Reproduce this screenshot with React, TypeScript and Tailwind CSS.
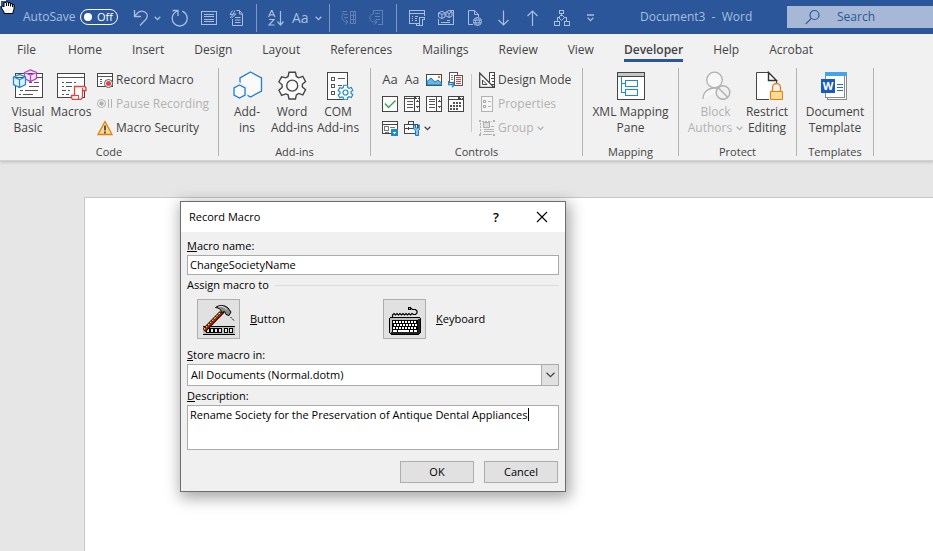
import { useState } from "react";
import type { ReactNode } from "react";
import clsx from "clsx";

const tabs = ["File", "Home", "Insert", "Design", "Layout", "References", "Mailings", "Review", "View", "Developer", "Help", "Acrobat"];

function Icon({ size = 16, crisp = true, className, children }: { size?: number; crisp?: boolean; className?: string; children: ReactNode }) {
    return (
        <svg
            width={size}
            height={size}
            viewBox={`0 0 ${size} ${size}`}
            fill="none"
            stroke="currentColor"
            shapeRendering={crisp ? "crispEdges" : "auto"}
            className={clsx("shrink-0", className)}
            aria-hidden="true"
        >
            {children}
        </svg>
    );
}

function Chevron({ className }: { className?: string }) {
    return (
        <svg width="7" height="5" viewBox="0 0 7 5" fill="none" stroke="currentColor" strokeWidth="1.3" className={clsx("shrink-0", className)} aria-hidden="true">
            <path d="M.7.8 3.5 3.6 6.3.8" />
        </svg>
    );
}

/* ---------- quick access toolbar ---------- */

const UndoIcon = () => (
    <Icon size={18} crisp={false}>
        <path d="M2.5 1v6.500H9M2.800 7.200C5 4 8 1.800 11 2.300c4 .7 5.300 4.200 3.600 7-1.200 2-3.800 4-6.600 7.200" strokeWidth="1.3" />
    </Icon>
);

const RedoIcon = () => (
    <Icon size={18} crisp={false}>
        <path d="M1.500 1.500h5.500v5.500M6.500 2C3 3.500 1.200 6.500 1.200 9.500a7.500 7.500 0 0 0 15 0c0-3.500-2-6-5-7.300" strokeWidth="1.3" />
    </Icon>
);

const ListIcon = () => (
    <Icon>
        <path d="M.5 1.500h15v13H.5zM3 4.500h10M3 6.500h10M3 9.500h10M3 11.500h10" />
    </Icon>
);

const FlashDocIcon = () => (
    <Icon crisp={false}>
        <path d="M7.500.5h3l3 3.500v11.500h-10V9M10.500.5V4h3M6 7.500h5.500M6 10h5.500M6 12.500h5.500" />
        <path d="M3.500.5 1 4.500h3L1 8M6 .5 4 4h3L2.500 8" />
    </Icon>
);

const SortIcon = () => (
    <Icon crisp={false}>
        <path d="M.5 7 3.500.5h.5L7 7M1.700 4.800h4M1 9.500h5L1 15h5.500M12.500 1v14M9.500 11.500l3 3.500 3-3.500" strokeWidth="1.200" />
    </Icon>
);

const MergeIcon = () => (
    <Icon>
        <path d="M1 1.500h5M3 4.500h4M3 7.500h4M9.500 1.500h5v12h-5zM12 1.500v12M9.500 5.500h5M9.500 9.500h5" />
        <path d="M3 3C0 5 0 10 4.500 12H7M4.500 9.500 7 12l-2.500 2.500" shapeRendering="auto" />
    </Icon>
);

const InsertDocIcon = () => (
    <Icon>
        <path d="M4 .5h9.500v14H9M4.500 0v4M6 3.500h5M6 6.500h5M7 9.500h4" />
        <path d="M4 4C-.5 5 0 11 4.500 12H8M5.500 9.500 8 12l-2.500 2.500" shapeRendering="auto" />
    </Icon>
);

const MacroListIcon = () => (
    <Icon>
        <path d="M8 13.500H.5v-13h15V6M.5 3.500h15M3 6.500h1M6 6.500h3M3 8.500h1M6 8.500h2M3 10.500h1M6 10.500h2" />
        <path d="M15.500 9V7h-5v8.500h3V9h2M7.500 15.500h6M7.500 15.500v-2h3" />
    </Icon>
);

const BoxesIcon = () => (
    <Icon>
        <path d="M.5 9v5.500h15V.5H12M3 12.500h9M9 10.500h3" />
        <path d="M.5 3 4 1.200 7 3v4L4 8.500.5 7zM.5 3 4 4.500 7 3M4 4.500v4M8 2l3-1.500L14 2v4l-3 1.500L8 6zM8 2l3 1.500L14 2M11 3.500v4" shapeRendering="auto" />
    </Icon>
);

const WebDocIcon = () => (
    <Icon crisp={false}>
        <path d="M6 14.500H1.500V.5h6l4 4V7M7.500.5v4h4" />
        <circle cx="10.500" cy="11.500" r="4" />
        <path d="M6.500 10.200h8M6.500 12.800h8M10.500 7.500c-2.500 2.500-2.500 5.500 0 8M10.500 7.500c2.500 2.500 2.500 5.500 0 8" />
    </Icon>
);

const DownIcon = () => (
    <Icon crisp={false}>
        <path d="M7.500.5v14.500M2.500 10l5 5 5-5" strokeWidth="1.200" />
    </Icon>
);

const UpIcon = () => (
    <Icon crisp={false}>
        <path d="M7.500 16V1M2.500 6l5-5 5 5" strokeWidth="1.200" />
    </Icon>
);

const OrgIcon = () => (
    <Icon>
        <path d="M5.500.5h4v3h-4zM.5 11.500h5v4h-5zM10.500 11.500h5v4h-5zM7.500 3.500v2M3.500 11V7.500h2M9.500 7.500h3V11" />
        <path d="M7.500 4.500l3 3-3 3-3-3z" shapeRendering="auto" />
    </Icon>
);

const QatDivider = () => <span className="mx-[5px] h-7 w-px shrink-0 bg-[#7d98c2]" />;

function QatButton({ label, wide, dim, children }: { label: string; wide?: boolean; dim?: boolean; children: ReactNode }) {
    return (
        <button
            aria-label={label}
            disabled={dim}
            className={clsx("flex h-8 shrink-0 items-center justify-center", wide ? "w-[29px]" : "w-7", dim && "text-[#5f81b5]")}
        >
            {children}
        </button>
    );
}

function TitleBar() {
    const [autoSave, setAutoSave] = useState(false);

    return (
        <header className="flex h-[34px] items-center overflow-hidden bg-[#2b579a] pl-[23px] text-[#a9bedd]">
            <span className="w-[57px] shrink-0 text-xs">AutoSave</span>
            <button
                role="switch"
                aria-checked={autoSave}
                aria-label="AutoSave"
                onClick={() => setAutoSave(!autoSave)}
                className="flex h-4 w-[38px] shrink-0 items-center justify-between rounded-full border border-white pr-1 pl-[3px] text-[11px] leading-none text-white"
            >
                <span className="size-2 rounded-full bg-white" />
                <span className="pb-0.5">{autoSave ? "On" : "Off"}</span>
            </button>
            <div className="flex shrink-0 items-center pt-0.5 pl-3">
                <button aria-label="Undo" className="flex h-8 w-[41px] items-center gap-1 pl-0.5">
                    <UndoIcon />
                    <Chevron />
                </button>
                <button aria-label="Repeat" className="flex h-8 w-6 items-center">
                    <RedoIcon />
                </button>
                <QatButton label="Form"><ListIcon /></QatButton>
                <QatButton label="AutoText"><FlashDocIcon /></QatButton>
                <QatDivider />
                <QatButton label="Sort"><SortIcon /></QatButton>
                <button className="flex h-8 w-[34px] items-center gap-1.5 pl-0.5 text-sm">
                    Aa
                    <Chevron />
                </button>
                <QatDivider />
                <QatButton label="Merge" dim><MergeIcon /></QatButton>
                <QatButton label="Insert" dim><InsertDocIcon /></QatButton>
                <QatDivider />
                <QatButton wide label="Macros"><MacroListIcon /></QatButton>
                <QatButton wide label="Visual Basic"><BoxesIcon /></QatButton>
                <QatButton wide label="Web page"><WebDocIcon /></QatButton>
                <QatButton wide label="Next"><DownIcon /></QatButton>
                <QatButton wide label="Previous"><UpIcon /></QatButton>
                <QatButton wide label="Organizer"><OrgIcon /></QatButton>
                <QatButton label="Customize Quick Access Toolbar">
                    <svg width="7" height="8" viewBox="0 0 7 8" fill="none" stroke="currentColor" strokeWidth="1.300" aria-hidden="true">
                        <path d="M0 1h7M.7 3.800l2.800 2.800 2.800-2.800" />
                    </svg>
                </QatButton>
            </div>
            <h1 className="ml-9 shrink-0 text-xs whitespace-pre">Document3  -  Word</h1>
            <label className="ml-auto flex h-[22px] w-[146px] shrink-0 items-center gap-4 bg-[#a6b8d5] pl-[18px] text-[#2b579a]">
                <Icon crisp={false}>
                    <circle cx="9.500" cy="6" r="4.500" strokeWidth="1.200" />
                    <path d="M6.300 9.300.8 14.800" strokeWidth="1.200" />
                </Icon>
                <input aria-label="Search" placeholder="Search" className="w-20 bg-transparent text-xs outline-none placeholder:text-[#2b579a]" />
            </label>
        </header>
    );
}

/* ---------- ribbon icons ---------- */

const VisualBasicIcon = () => (
    <Icon size={32}>
        <path d="M3.500 5.500h27v24h-27z" fill="#fff" stroke="#444" />
        <path d="M4 9.500h26M17 14.500h3M22 14.500h5M17 18.500h10M8 22.500h3M13 22.500h13M7 26.500h2M11 26.500h10" stroke="#555" />
        <g shapeRendering="auto" strokeWidth="1.300">
            <path d="M12.500 4.500 18.500 2 24.500 4.500v6L18.500 13.500l-6-3zM12.500 4.500l6 2.500L24.500 4.500M18.500 7v6.500" fill="#f3e3f5" stroke="#b146c2" />
            <path d="M1.500 9 7.500 6.500 13.500 9v7.500L7.500 19.500l-6-3zM1.500 9 7.500 11.500l6-2.500M7.500 11.500v8" fill="#e2f0fb" stroke="#1e8bcd" />
        </g>
    </Icon>
);

const MacrosIcon = () => (
    <Icon size={32}>
        <path d="M2.500 5.500h27v24h-27z" fill="#fff" stroke="#444" />
        <path d="M3 9.500h26M7 14.500h2M11 14.500h6M19 14.500h2M7 18.500h2M11 18.500h6M7 22.500h4M13 22.500h2M7 26.500h2M11 26.500h3" stroke="#555" />
        <path d="M19.500 18.500h9.500q2 0 2 2v2h-3.500v5.500q0 3.500-3 3.500h-6.500q-1.500 0-1.500-4h3z" fill="#fff" stroke="#e8403a" strokeWidth="1.300" shapeRendering="auto" />
        <path d="M27.500 22.500v-3M19.500 27.500h4v3" stroke="#e8403a" />
    </Icon>
);

const RecordIcon = () => (
    <Icon>
        <path d="M.5 1.500h15v13H.5z" fill="#fff" stroke="#444" />
        <path d="M1 4.500h14M3 7.500h2M3 9.500h2M3 11.500h2" stroke="#555" />
        <g shapeRendering="auto">
            <circle cx="11.500" cy="11.500" r="4" fill="#fff" stroke="#555" />
            <circle cx="11.500" cy="11.500" r="2.500" fill="#e8403a" stroke="none" />
        </g>
    </Icon>
);

const PauseIcon = () => (
    <Icon crisp={false}>
        <circle cx="4.500" cy="7.500" r="4" fill="#f4f4f4" />
        <circle cx="4.500" cy="7.500" r="2.200" fill="currentColor" stroke="none" />
        <path d="M11.500 3v9M14.500 3v9" shapeRendering="crispEdges" />
    </Icon>
);

const WarningIcon = () => (
    <Icon crisp={false}>
        <path d="M8 1.500 15 14.500H1z" fill="#fbdc8e" stroke="#e37d16" strokeWidth="1.300" />
        <path d="M8 5.500v5M8 11.500v2" stroke="#333" strokeWidth="1.600" />
    </Icon>
);

const AddInsIcon = () => (
    <Icon size={32} crisp={false} className="text-[#1e7fd0]">
        <path d="M19.500 4 30.500 10v13l-11 6L9 23V10z" fill="#fafafa" strokeWidth="1.300" />
        <path d="M8.500 16.500 14.500 19.500v7.500L8.500 30.500l-6-3.500v-7.500z" fill="#fafafa" stroke="#f1f1f1" strokeWidth="4" />
        <path d="M8.500 17l5.500 3v7l-5.500 3-5.500-3v-7z" fill="#fafafa" strokeWidth="1.300" />
    </Icon>
);

const gearPath = "M12.500 2.500h7l1 4.500 2.500 1.500 4.500-1.500 3 5.500-3.500 3v3l3.500 3-3 5.500-4.500-1.500-2.500 1.500-1 4.500h-7l-1-4.500L9 26l-4.500 1.500-3-5.500L5 19v-3l-3.500-3 3-5.500L9 8.500 11.500 7z";

const GearIcon = () => (
    <Icon size={32} crisp={false} className="text-[#444]">
        <g transform="translate(1.500 2) scale(.92)" strokeWidth="1.500">
            <path d={gearPath} fill="#fafafa" />
            <circle cx="16" cy="17" r="6" />
        </g>
    </Icon>
);

const ComIcon = () => (
    <Icon size={32}>
        <path d="M5.500 4.500h20v27h-20z" fill="#fff" stroke="#444" />
        <path d="M9.500 9.500h3v3h-3zM9.500 16.500h3v3h-3zM9.500 23.500h3v3h-3zM16 10.500h7M16 17.500h4" stroke="#555" />
        <g transform="translate(15.500 16) scale(.5)" shapeRendering="auto" stroke="#1e8bcd" strokeWidth="2.400">
            <path d={gearPath} fill="#fff" />
            <circle cx="16" cy="17" r="5" />
        </g>
    </Icon>
);

const PictureIcon = () => (
    <Icon>
        <path d="M.5 2.500h15v11H.5z" fill="#fff" stroke="#444" />
        <path d="M1 9.500 5 6l4 4 3-2 3.500 3V13H1z" fill="#66b5ea" stroke="#1577bd" shapeRendering="auto" />
        <path d="M12 4h2v2h-2z" fill="#ee7b1f" stroke="none" />
    </Icon>
);

const BlocksIcon = () => (
    <Icon>
        <path d="M1.500.5h8v10h-8z" fill="#fff" stroke="#555" />
        <path d="M3 3.500h2M3 5.500h2M3 7.500h2" stroke="#777" />
        <path d="M6.500 3.500h8v10h-8z" fill="#fff" stroke="#555" />
        <path d="M8 5.500h5M8 7.500h5M8 9.500h5M8 11.500h5" stroke="#e8403a" />
        <path d="M.5 9v3.500h6M4 10l2.500 2.500L4 15.200" stroke="#1e8bcd" strokeWidth="1.300" shapeRendering="auto" />
    </Icon>
);

const CheckIcon = () => (
    <Icon>
        <path d="M.5.5h15v15H.5z" fill="#fff" stroke="#444" />
        <path d="M3 7.500 6.500 11.500l7-7" stroke="#2ea44f" strokeWidth="1.400" shapeRendering="auto" />
    </Icon>
);

const ComboIcon = ({ drop }: { drop?: boolean }) => (
    <Icon>
        <path d="M.5.500h15v15H.5zM10.500.5v15" fill="#fff" stroke="#444" />
        {drop && <path d="M0 0h16v3H0z" fill="#444" stroke="none" />}
        {drop && <path d="M1 1h9v1H1z" fill="#fff" stroke="none" />}
        <path d="M2.500 5.500h6M2.500 8.500h6M2.500 11.500h6" stroke="#555" />
        {!drop && <path d="M2.500 3.500h6" stroke="#555" />}
        <path d="M13 4v2M12 5.500h3M13 10v2M12 10.500h3" stroke="#555" />
        {drop && <path d="M12 1h3l-1.500 2z" fill="#fff" stroke="none" />}
    </Icon>
);

const DateIcon = () => (
    <Icon>
        <path d="M.5.500h15v15H.5z" fill="#fff" stroke="#444" />
        <path d="M10 0h6v4h-6zM0 3h16v1H0z" fill="#444" stroke="none" />
        <path d="M12 1h3l-1.500 2z" fill="#fff" stroke="none" />
        <path d="M5 7h9M2 10h12M2 13h8" stroke="#555" strokeWidth="2" strokeDasharray="2 1" />
    </Icon>
);

const DropListIcon = () => (
    <Icon>
        <path d="M.5 1.500h15v12H.5z" fill="#fff" stroke="#444" />
        <path d="M1 4.500h14" stroke="#444" />
        <path d="M2.500 6.500h4v4h-4zM8 7.500h5M2.500 12.500h4" stroke="#777" />
        <path d="M9 9h7v7H9z" fill="#1e8bcd" stroke="none" />
        <path d="M10.500 11.500h4l-2 2.500z" fill="#fff" stroke="none" />
    </Icon>
);

const LegacyIcon = () => (
    <Icon>
        <path d="M.5 4.500h13v9H.5z" fill="#fff" stroke="#444" />
        <path d="M4.500 4V1.500h5V4M1 8.500h10M4.500 7v3" stroke="#444" />
        <path d="M9.500 5v4l2 1.500v5h3v-5L16 9V5h-1.500v3h-3V5z" fill="#8cc4ee" stroke="#1577bd" shapeRendering="auto" />
    </Icon>
);

const DesignIcon = () => (
    <Icon>
        <path d="M10.500.5h5v15h-5z" fill="#fff" stroke="#444" />
        <path d="M13 3.500h2M12 6.500h3M13 9.500h2M12 12.500h3" stroke="#444" />
        <path d="M.7 1v14.300h14.300z" fill="#fff" stroke="#444" strokeWidth="1.300" shapeRendering="auto" />
        <path d="M3.500 8v4.500h4.500z" stroke="#444" shapeRendering="auto" />
    </Icon>
);

const PropertiesIcon = () => (
    <Icon>
        <path d="M2.500.500h11v15h-11z" fill="#f7f7f7" />
        <path d="M4.500 4.500h2v2h-2zM4.500 9.500h2v2h-2zM9 5.500h3M9 10.500h3" />
    </Icon>
);

const GroupIcon = () => (
    <Icon>
        <path d="M0 1h2M14 1h2M0 15h2M14 15h2" strokeWidth="2" />
        <path d="M3 1.500h10M1.500 3v11" strokeDasharray="2 1" />
        <path d="M4.500 2.500h6v5h-6z" fill="#ddd" />
        <path d="M5 9.500h10M5 11.500h10M12 6.500h3M4 14.500h9" />
    </Icon>
);

const XmlIcon = () => (
    <Icon size={32}>
        <path d="M2.500 4.500h27v27h-27z" fill="#fff" stroke="#444" />
        <path d="M3 5h26v3H3z" fill="#c8c6c4" stroke="none" />
        <path d="M3 8.500h26" stroke="#444" />
        <path d="M6.500 9v15.500h4M6.500 15.500h4M10.500 12.500h12v6h-12zM10.500 21.500h12v6h-12z" stroke="#1e8bcd" />
    </Icon>
);

const BlockIcon = () => (
    <Icon size={32} crisp={false}>
        <circle cx="14.500" cy="12" r="7.800" fill="#f7f7f7" strokeWidth="1.300" />
        <path d="M3 31c0-6.500 5-11 12-11 2 0 4 .5 5.500 1.500" fill="#f7f7f7" strokeWidth="1.300" />
        <circle cx="23" cy="24.500" r="6.800" fill="#f1f1f1" strokeWidth="1.500" />
        <path d="M18.500 20l9.500 9.500" strokeWidth="1.500" />
    </Icon>
);

const RestrictIcon = () => (
    <Icon size={32} crisp={false}>
        <path d="M5.500 4.500h12l8 8v19h-20z" fill="#fff" stroke="#444" />
        <path d="M17.500 4.500v8h8z" fill="#fff" stroke="#333" strokeWidth="1.400" />
        <path d="M18 22h14v10H18z" fill="#f1f1f1" stroke="none" />
        <path d="M21.500 23v-3.500a4 4 0 0 1 8 0V23" fill="#f1f1f1" stroke="#e37d16" strokeWidth="1.300" />
        <path d="M19.500 23.500h12v8h-12z" fill="#fbdc8e" stroke="#e37d16" />
    </Icon>
);

const TemplateIcon = () => (
    <Icon size={32}>
        <path d="M8.500 6.500h19v25h-19z" fill="#fff" stroke="#888" />
        <path d="M6.500 4.500h19v25h-19z" fill="#fff" stroke="#888" />
        <path d="M6 4h22v4H6z" fill="#41a5ee" stroke="none" />
        <path d="M18 16.500h6M18 19.500h6M18 22.500h6" stroke="#1f6fc5" />
        <path d="M2 11h14v14H2z" fill="#185abd" stroke="none" />
        <text x="9" y="22" textAnchor="middle" fill="#fff" stroke="none" fontSize="11" fontWeight="700">W</text>
    </Icon>
);

/* ---------- ribbon ---------- */

function RibbonGroup({ label, className, children }: { label: string; className: string; children: ReactNode }) {
    return (
        <section aria-label={label} className={clsx("flex shrink-0 flex-col border-r border-[#b3b3b3]", className)}>
            <div className="flex h-[76px] shrink-0 items-start">{children}</div>
            <h2 className="text-center text-[11px] leading-4">{label}</h2>
        </section>
    );
}

function BigButton({ icon, lines, className, disabled, menu }: { icon: ReactNode; lines: string[]; className: string; disabled?: boolean; menu?: boolean }) {
    return (
        <button disabled={disabled} className={clsx("flex shrink-0 flex-col items-center text-xs leading-4 whitespace-nowrap disabled:text-[#b1b1b1]", className)}>
            <span className="flex h-9">{icon}</span>
            {lines.map((line, i) => (
                <span key={line} className="flex items-center gap-1">
                    {line}
                    {menu && i === lines.length - 1 && <Chevron />}
                </span>
            ))}
        </button>
    );
}

function SmallButton({ icon, label, disabled, menu }: { icon: ReactNode; label: string; disabled?: boolean; menu?: boolean }) {
    return (
        <button disabled={disabled} className="flex h-6 items-center gap-[3px] text-xs whitespace-nowrap disabled:text-[#b1b1b1]">
            {icon}
            {label}
            {menu && <Chevron />}
        </button>
    );
}

function Ribbon() {
    const controls = [
        { label: "Rich Text", icon: <span className="text-[13px]">Aa</span> },
        { label: "Plain Text", icon: <span className="text-xs">Aa</span> },
        { label: "Picture", icon: <PictureIcon /> },
        { label: "Building Block Gallery", icon: <BlocksIcon /> },
        { label: "Check Box", icon: <CheckIcon /> },
        { label: "Combo Box", icon: <ComboIcon drop /> },
        { label: "List Box", icon: <ComboIcon /> },
        { label: "Date Picker", icon: <DateIcon /> },
        { label: "Drop-Down List", icon: <DropListIcon /> },
    ];

    return (
        <div className="flex h-[92px] overflow-hidden pb-1">
            <RibbonGroup label="Code" className="w-[219px]">
                <BigButton className="w-11 pl-3" icon={<VisualBasicIcon />} lines={["Visual", "Basic"]} />
                <BigButton className="ml-1 w-[46px]" icon={<MacrosIcon />} lines={["Macros"]} />
                <div className="ml-[3px] flex flex-col">
                    <SmallButton icon={<RecordIcon />} label="Record Macro" />
                    <SmallButton icon={<PauseIcon />} label="Pause Recording" disabled />
                    <SmallButton icon={<WarningIcon />} label="Macro Security" />
                </div>
            </RibbonGroup>
            <RibbonGroup label="Add-ins" className="w-[152px]">
                <BigButton className="ml-2 w-10" icon={<AddInsIcon />} lines={["Add-", "ins"]} />
                <BigButton className="ml-0.5 w-[46px]" icon={<GearIcon />} lines={["Word", "Add-ins"]} />
                <BigButton className="w-[46px]" icon={<ComIcon />} lines={["COM", "Add-ins"]} />
            </RibbonGroup>
            <RibbonGroup label="Controls" className="w-[212px]">
                <div className="ml-2 grid grid-cols-[repeat(4,22px)]">
                    {controls.map((c) => (
                        <button key={c.label} aria-label={c.label} className="flex h-6 items-center justify-center">{c.icon}</button>
                    ))}
                    <button aria-label="Legacy Tools" className="col-span-2 flex h-6 items-center gap-1 pl-[3px]">
                        <LegacyIcon />
                        <Chevron />
                    </button>
                </div>
                <span className="mx-1 mt-1.5 mr-[7px] h-[58px] w-px bg-[#c8c8c8]" />
                <div className="flex flex-col">
                    <SmallButton icon={<DesignIcon />} label="Design Mode" />
                    <SmallButton icon={<PropertiesIcon />} label="Properties" disabled />
                    <SmallButton icon={<GroupIcon />} label="Group" disabled menu />
                </div>
            </RibbonGroup>
            <RibbonGroup label="Mapping" className="w-24">
                <BigButton className="w-full" icon={<XmlIcon />} lines={["XML Mapping", "Pane"]} />
            </RibbonGroup>
            <RibbonGroup label="Protect" className="w-[118px]">
                <BigButton className="ml-2.5 w-[53px]" icon={<BlockIcon />} lines={["Block", "Authors"]} disabled menu />
                <BigButton className="ml-0.5 w-[46px]" icon={<RestrictIcon />} lines={["Restrict", "Editing"]} />
            </RibbonGroup>
            <RibbonGroup label="Templates" className="w-[77px]">
                <BigButton className="w-full" icon={<TemplateIcon />} lines={["Document", "Template"]} />
            </RibbonGroup>
        </div>
    );
}

/* ---------- dialog ---------- */

const HammerIcon = () => (
    <Icon size={32}>
        <path d="M0 24h32v8H0z" fill="#c0c0c0" stroke="none" />
        <path d="M0 23.500h32M0 31.500h32" stroke="#000" />
        <path d="M3.500 25.500h3v4h-3zM7.500 25.500h3v4h-3zM11.500 25.500h3v4h-3zM15.500 25.500h3v4h-3zM21.500 25.500h3v4h-3zM26.500 25.500h3v4h-3z" fill="#e8e8e8" stroke="#000" />
        <g shapeRendering="auto">
            <path d="M1 27.500 20 8" stroke="#000" strokeWidth="4.500" />
            <path d="M.8 26.500 19 7.800" stroke="#ffe81a" strokeWidth="1.300" strokeDasharray="2 1" />
            <path d="M1.800 27.500 20 8.800" stroke="#d81414" strokeWidth="1.300" />
            <path d="M12.500 4.500c3-2.500 9-3 12.500.5l3 4-2 3.500-3-1-1.500-3-3 1c0-3-2.500-4.500-6-5z" fill="#8a8a8a" stroke="#000" />
            <path d="M15.500 3.800c3-1 6 0 8 3" stroke="#eee" />
            <path d="M27.500 14l4 4" stroke="#000" strokeDasharray="2 1" />
        </g>
    </Icon>
);

const KeyboardIcon = () => (
    <Icon size={32}>
        <path
            d="M3.500 15v-3l1.500-1.500 1.500 1.500 1.500-1.500 1.500 1.500 1.500-1.500 1.500 1.500 1.500-1.500 1.500 1.500 1.500-1.500 1.500 1.500 1.500-1.500 1.500 1.500 1.500-1.500 1.500 1h2l1.500-1.500v-2l-1.500-1.500h-3l-2-1.500"
            stroke="#000"
            strokeWidth="1.200"
            shapeRendering="auto"
        />
        <path d="M19.500 4.500h2v2h-2z" fill="#e8dc00" stroke="#000" />
        <path d="M1.500 14.500h29l1 1v14l-1.500 1.500h-28l-1.500-1.500v-14z" fill="#c0c0c0" stroke="#000" />
        <path d="M2 30h28M30 16v14" stroke="#222" strokeWidth="2" />
        <path d="M3 17h26v12H3z" fill="#000" stroke="none" />
        <path d="M4 18.500h24M5 21.500h23M4 24.500h24" stroke="#fff" strokeWidth="2" strokeDasharray="2 1" />
        <path d="M4 27.500h4M9 27.500h11M21 27.500h3M25 27.500h3" stroke="#fff" strokeWidth="2" />
    </Icon>
);

function RecordMacroDialog() {
    const [name, setName] = useState("ChangeSocietyName");
    const [description, setDescription] = useState("Rename Society for the Preservation of Antique Dental Appliances");

    return (
        <div
            role="dialog"
            aria-labelledby="dialog-title"
            className="absolute top-[201px] left-[180px] w-[386px] border border-[#6d6d6d] bg-[#f0f0f0] text-[11px] leading-4 text-black shadow-[2px_4px_14px_2px_rgba(0,0,0,0.35)]"
        >
            <div className="flex h-[30px] items-center bg-white pr-[17px] pl-2">
                <h2 id="dialog-title" className="flex-1">Record Macro</h2>
                <button aria-label="Help" className="w-4 text-[13px] font-semibold">?</button>
                <button aria-label="Close" className="ml-8">
                    <svg width="12" height="12" viewBox="0 0 12 12" stroke="#000" strokeWidth="1.100" aria-hidden="true">
                        <path d="M1 1l10 10M11 1 1 11" />
                    </svg>
                </button>
            </div>
            <form className="flex flex-col px-1.5 pt-1.5 pb-2" onSubmit={(e) => e.preventDefault()}>
                <label htmlFor="macro-name" className="h-[17px]"><u>M</u>acro name:</label>
                <input
                    id="macro-name"
                    value={name}
                    onChange={(e) => setName(e.target.value)}
                    className="h-5 border border-[#ababab] bg-white px-0.5 pb-0.5 outline-none"
                />
                <div role="group" aria-labelledby="assign-label">
                    <div className="flex items-center gap-1.5 pt-0.5">
                        <span id="assign-label">Assign macro to</span>
                        <span className="h-px flex-1 bg-[#dcdcdc]" />
                    </div>
                    <div className="grid grid-cols-2 px-2.5 pt-1.5">
                        <div className="flex items-center gap-2.5">
                            <button id="assign-button" aria-labelledby="assign-button-label" className="flex h-10 w-[43px] items-center justify-center border border-[#adadad] bg-[#e1e1e1]">
                                <HammerIcon />
                            </button>
                            <label id="assign-button-label" htmlFor="assign-button"><u>B</u>utton</label>
                        </div>
                        <div className="flex items-center gap-2.5 pl-2.5">
                            <button id="assign-keyboard" aria-labelledby="assign-keyboard-label" className="flex h-10 w-[43px] items-center justify-center border border-[#adadad] bg-[#e1e1e1]">
                                <KeyboardIcon />
                            </button>
                            <label id="assign-keyboard-label" htmlFor="assign-keyboard"><u>K</u>eyboard</label>
                        </div>
                    </div>
                </div>
                <label htmlFor="store-in" className="mt-2 h-[17px]"><u>S</u>tore macro in:</label>
                <div className="relative flex h-[22px]">
                    <select id="store-in" className="w-full appearance-none border border-[#ababab] bg-white px-[3px] outline-none">
                        <option>All Documents (Normal.dotm)</option>
                    </select>
                    <span className="pointer-events-none absolute top-0 right-0 flex h-full w-[18px] items-center justify-center border border-[#ababab] bg-[#e1e1e1] text-[#444]">
                        <svg width="9" height="6" viewBox="0 0 9 6" fill="none" stroke="currentColor" strokeWidth="1.300" aria-hidden="true">
                            <path d="M.5.700l4 4 4-4" />
                        </svg>
                    </span>
                </div>
                <label htmlFor="description" className="mt-0.5 h-[17px]"><u>D</u>escription:</label>
                <div className="relative flex">
                    <textarea
                        id="description"
                        value={description}
                        onChange={(e) => setDescription(e.target.value)}
                        className="h-[45px] w-full resize-none border border-[#ababab] bg-white px-0.5 py-px outline-none"
                    />
                    <span className="absolute top-[3px] left-[341px] h-[13px] w-px bg-black" />
                </div>
                <div className="mt-[11px] flex justify-end gap-2.5 pr-px">
                    <button className="h-[22px] w-[74px] border border-[#adadad] bg-[#e1e1e1]">OK</button>
                    <button className="h-[22px] w-[74px] border border-[#adadad] bg-[#e1e1e1]">Cancel</button>
                </div>
            </form>
        </div>
    );
}

export default function App() {
    const [active, setActive] = useState("Developer");

    return (
        <div className="relative flex min-h-screen flex-col overflow-hidden bg-[#e6e6e6] font-['Open_Sans','Noto_Sans',sans-serif] text-[#444]">
            <TitleBar />
            <div className="border-b border-[#d2d2d2] bg-[#f1f1f1] shadow-[0_1px_3px_rgba(0,0,0,0.2)]">
                <nav className="flex h-[34px] gap-[30px] pl-[17px] text-xs">
                    {tabs.map((tab) => (
                        <button
                            key={tab}
                            onClick={() => setActive(tab)}
                            className={clsx(
                                "mb-1.5 shrink-0 border-b-3 pt-[7px]",
                                tab === "File" && "mr-0.5",
                                tab === active ? "border-[#2b579a] font-semibold" : "border-transparent"
                            )}
                        >
                            {tab}
                        </button>
                    ))}
                </nav>
                <Ribbon />
            </div>
            <main className="mt-9 ml-[84px] flex-1 border-t border-l border-[#c6c6c6] bg-white" />
            <RecordMacroDialog />
            <svg width="16" height="15" viewBox="0 0 16 15" className="absolute top-0 left-0" aria-hidden="true">
                <path d="M0 0h6v1H1v5H0z" fill="#fff" />
                <path d="M4 13.500V12L1.500 8V6.500L3 6l1 1V2.500h2V2h2v.500h2v1h2v1h2V9l-1 3v1.500z" fill="#fff" stroke="#000" />
                <path d="M6.500 3v3M8.500 3v3M10.500 4v2.500M12.500 5v2" stroke="#000" />
            </svg>
        </div>
    );
}
